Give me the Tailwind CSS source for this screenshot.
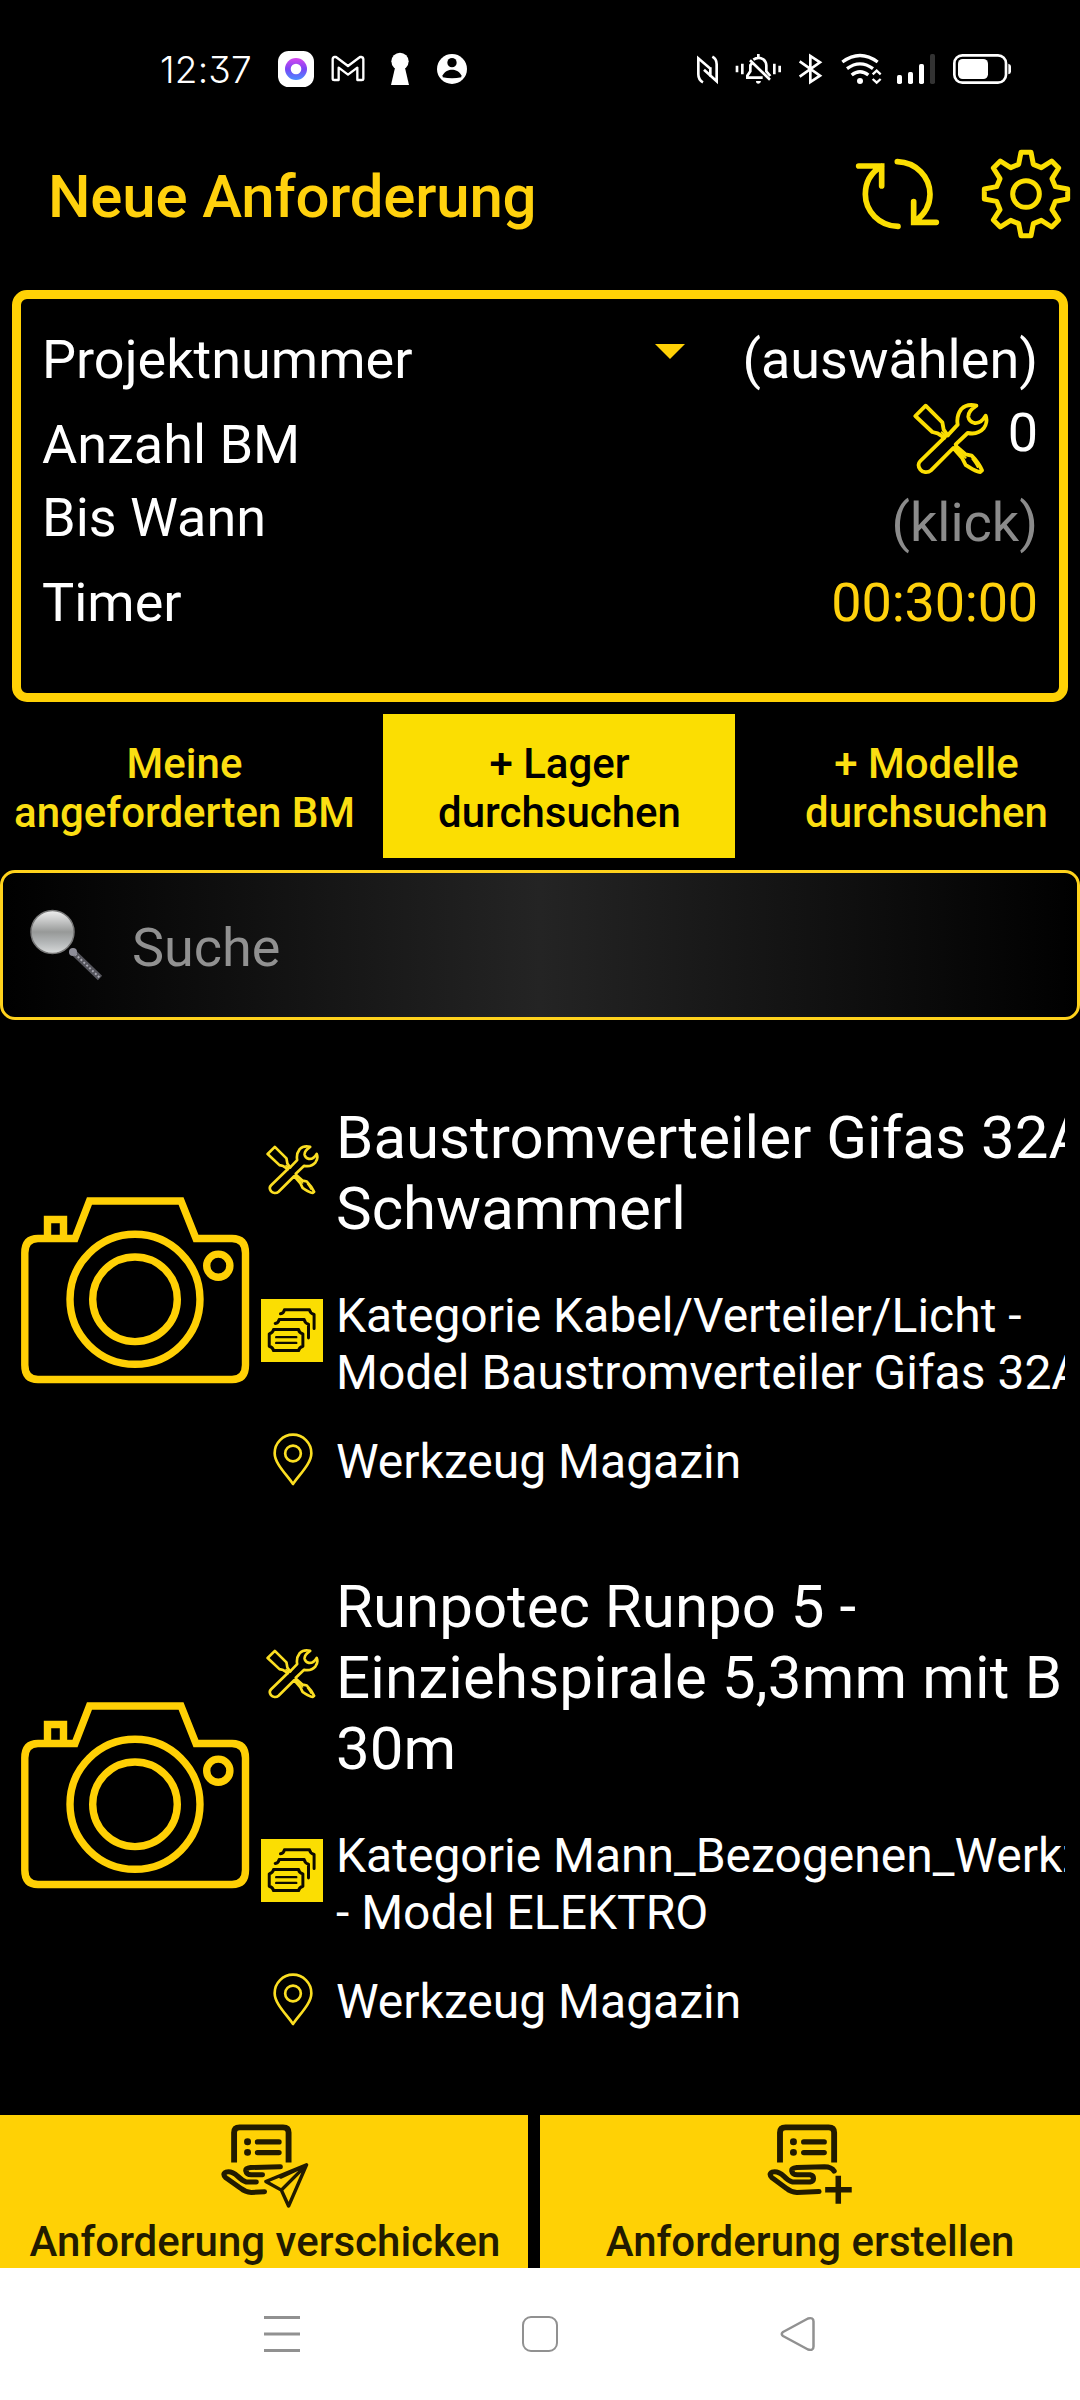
<!DOCTYPE html>
<html lang="de">
<head>
<meta charset="utf-8">
<title>Neue Anforderung</title>
<script src="https://cdn.jsdelivr.net/npm/@tailwindcss/browser@4"></script>
</head>
<body class="bg-black">
<svg class="hidden">
  <defs>
    <symbol id="tools" viewBox="0 0 228 216" preserveAspectRatio="none">
      <g fill="none" stroke="currentColor" stroke-width="11.500" stroke-linejoin="round" stroke-linecap="round">
        <path d="M38 8L7 39L58 87L74 91L94 104M38 8L88 58L92 80L104 97"/>
        <path d="M104 97L134 65C131 48 136 30 145 18C156 7 174 4 190 8C175 18 165 30 166 42C168 53 176 58 184 60C198 62 210 52 218 38C223 50 220 66 212 76C200 90 184 94 164 90L128 124L130 130L158 154L176 158C190 172 200 186 207 202L202 207C186 206 172 194 158 186L148 166L121 135L54 202C44 211 28 208 22 200C14 190 16 180 22 174L94 104"/>
        <path d="M132 140L158 164M178 168C184 176 190 184 194 192" stroke-width="6"/>
        <path d="M86 88L100 101" stroke-width="6"/>
      </g>
    </symbol>
    <symbol id="stack" viewBox="64 567 188 188" preserveAspectRatio="none">
      <rect x="64" y="567" width="188" height="188" fill="#fbde02"/>
      <g fill="none" stroke="#0d0b00" stroke-width="9" stroke-linejoin="round">
        <path d="M102 658H178Q179 668 191 671V708Q180 711 178 721H102Q100 711 89 708V671Q100 668 102 658Z"/>
        <path stroke-linecap="round" stroke-width="7" d="M110 681H171M110 698H171"/>
        <path stroke-linecap="round" d="M107 640Q117 639 119 628H195Q197 639 208 642V683M123 611Q133 610 135 599H211Q213 610 225 613V655"/>
      </g>
    </symbol>
    <symbol id="pin" viewBox="99 969 120 158" preserveAspectRatio="none">
      <g fill="none" stroke="#fbde22" stroke-width="8">
        <path stroke-linejoin="round" d="M159 1121C140 1093 104 1060 104 1029A55 55 0 0 1 214 1029C214 1060 178 1093 159 1121Z"/>
        <circle cx="159" cy="1030" r="23.500"/>
      </g>
    </symbol>
    <symbol id="camera" viewBox="0 0 256 200">
      <g fill="none" stroke="#ffd005" stroke-width="7.4">
        <path d="M75 42.5L89.500 5H181L196 42.500H232Q245.500 42.500 245.500 57V169Q245.500 183.500 232 183.500H38Q24.800 183.500 24.800 169V57Q24.800 42.500 38 42.500H75Z"/>
        <path d="M47.500 42V23.500H63.500V42"/>
        <circle cx="135" cy="103.300" r="65"/>
        <circle cx="135" cy="103.300" r="42.300"/>
        <circle cx="218.300" cy="69.700" r="11.600"/>
      </g>
    </symbol>
  </defs>
</svg>

<div class="flex h-[2400px] w-[1080px] flex-col overflow-hidden bg-black font-['Roboto',sans-serif] text-white">

  <!-- Status bar -->
  <div class="flex h-[110px] shrink-0 items-end">
    <div class="flex h-20 w-[275px] items-center pl-[160px]">
      <span class="pb-0.5 font-['Inter',sans-serif] text-[37px] leading-none font-[350] tracking-[0.2px] [font-feature-settings:'cv09']">12:37</span>
    </div>
    <svg class="h-20 w-[42px]" viewBox="405 0 126 240">
      <defs><linearGradient id="ring" x1="0" y1="0" x2="0" y2="1"><stop offset="0" stop-color="#d846ee"/><stop offset=".5" stop-color="#7a45f5"/><stop offset="1" stop-color="#4a8dff"/></linearGradient></defs>
      <rect x="414" y="63" width="108" height="108" rx="32" fill="#fff"/>
      <circle cx="468" cy="117" r="33" fill="url(#ring)"/><circle cx="468" cy="117" r="16" fill="#fff"/>
    </svg>
    <svg class="ml-[11px] h-20 w-10" viewBox="564 0 120 240" fill="none" stroke="#fff" stroke-width="7" stroke-linejoin="round">
      <path d="M583 81Q578 82 578 88V146Q578 150 583 150H596V113L624 134L652 113V150H665Q670 150 670 146V88Q670 82 664 81H660L624 108L588 81Z"/>
    </svg>
    <svg class="ml-[17px] h-20 w-[30px]" viewBox="735 0 90 240" fill="#fff"><circle cx="780" cy="94" r="26"/><path d="M767 105H793L807 165H753Z"/></svg>
    <svg class="ml-[19px] h-20 w-9" viewBox="882 0 108 240"><circle cx="936" cy="117" r="45" fill="#fff"/><circle cx="936" cy="98" r="14" fill="#000"/><path d="M908 142V136C914 124 926 119 936 119S958 124 964 136V142Q950 145 936 145T908 142Z" fill="#000"/></svg>

    <svg class="ml-[224px] h-20 w-[27px]" viewBox="42 0 81 240" fill="none" stroke="#fff" stroke-width="8"><path d="M69 157Q55 150 55 133V85L93 118M97 80Q110 87 110 103V154L72 119M91 112V140"/></svg>
    <svg class="ml-[13px] h-20 w-[49px]" viewBox="162 0 147 240" fill="none" stroke="#fff" stroke-width="8"><path d="M171 107V127M187 101V133M283 101V133M299 107V127"/><path d="M210 91L270 149M215 101L211 106V124L202 137V143H248M220 89Q235 79 250 88Q258 94 259 106V124L271 138M235 72V82"/><path d="M228 153H243Q242 161 235 161T228 153Z" fill="#fff" stroke="none"/></svg>
    <svg class="ml-[14px] h-20 w-[27px]" viewBox="351 0 81 240" fill="none" stroke="#fff" stroke-width="8"><path d="M359 94L420 137L391 156V78L420 97L359 140"/></svg>
    <svg class="ml-[16px] h-20 w-[43px]" viewBox="480 0 129 240" fill="none" stroke="#fff" stroke-width="10"><path d="M487 96Q540 57 593 96M501 116Q540 87 579 116M515 135Q540 115 565 135"/><circle cx="540" cy="153" r="9" fill="#fff" stroke="none"/><path stroke-width="7" d="M578 133L590 122L602 133M578 147L590 158L602 147"/></svg>
    <svg class="ml-[12px] h-20 w-[42px]" viewBox="645 0 126 240" fill="#fff"><rect x="651" y="135" width="15" height="27" rx="5"/><rect x="684" y="126" width="15" height="36" rx="5"/><rect x="717" y="102" width="15" height="60" rx="5"/><rect x="750" y="72" width="15" height="90" rx="5" fill="#333"/></svg>
    <svg class="ml-[14px] h-20 w-[62px]" viewBox="813 0 186 240"><rect x="823" y="76" width="155" height="82" rx="24" fill="none" stroke="#fff" stroke-width="8"/><rect x="834" y="87" width="90" height="60" rx="14" fill="#fff"/><path d="M985 101Q993 103 993 109V125Q993 131 985 133Z" fill="#fff"/></svg>
  </div>

  <!-- Title bar -->
  <div class="flex h-[180px] shrink-0 items-start">
    <h1 class="mt-[52px] ml-12 w-[805px] text-[60px] leading-[70px] font-medium tracking-[-0.2px] text-[#ffd10d]">Neue Anforderung</h1>
    <svg class="mt-10 size-[90px]" viewBox="100 60 270 270" fill="none" stroke="#fbde02" stroke-width="17" stroke-linecap="round">
      <path d="M117 108H186V168M186 108C150 130 137 160 137 193C137 243 178 288 235 289M350 277H282V215M288 273C316 252 331 226 331 193C331 141 290 97 233 95"/>
    </svg>
    <svg class="mt-[38px] ml-[37px] size-[92px]" viewBox="480 54 276 276" fill="none" stroke="#fbde02" stroke-width="15" stroke-linejoin="round">
      <path d="M603 67H633L640 103L664 113L695 93L716 114L696 146L706 170L743 177V207L706 214L696 239L716 270L695 291L664 271L640 281L633 317H603L596 281L572 271L541 291L520 270L540 239L530 214L493 207V177L530 170L540 146L520 114L541 93L572 113L596 103Z"/>
      <circle cx="618" cy="192" r="40"/>
    </svg>
  </div>

  <!-- Request details -->
  <div class="mx-3 flex h-[412px] shrink-0 justify-between rounded-[15px] border-[9px] border-[#ffd105] pr-[21px] pl-[21px] text-[54px] leading-[63px]">
    <div class="flex flex-col">
      <span class="mt-[29px]">Projektnummer</span>
      <span class="mt-[22px]">Anzahl BM</span>
      <span class="mt-[10px]">Bis Wann</span>
      <span class="mt-[22px]">Timer</span>
    </div>
    <div class="flex flex-col items-end">
      <div class="mt-[29px] flex items-start">
        <svg class="mt-4 mr-[57px] h-[15px] w-[30px]" viewBox="0 0 30 15"><path d="M0 0H30L15 15Z" fill="#ffd105"/></svg>
        <span>(auswählen)</span>
      </div>
      <div class="mt-[10px] flex items-start">
        <svg class="mt-0.5 mr-[19px] h-[72px] w-[76px] text-[#fbde02]"><use href="#tools"/></svg>
        <span>0</span>
      </div>
      <span class="mt-4 text-[#8b8b8b]">(klick)</span>
      <span class="mt-[17px] tracking-[-0.2px] text-[#ffd10d]">00:30:00</span>
    </div>
  </div>

  <!-- Tabs -->
  <div class="mt-3 flex h-36 shrink-0 gap-[15px] text-center text-[42px] leading-[49px] font-medium text-[#fbde12]">
    <div class="w-[368px] pt-[25px] pl-px">Meine<br>angeforderten BM</div>
    <div class="w-[352px] bg-[#fbde02] pt-[25px] pl-px text-black">+ Lager<br>durchsuchen</div>
    <div class="flex-1 pt-[25px] pl-[23px]">+ Modelle<br>durchsuchen</div>
  </div>

  <!-- Search -->
  <div class="mt-3 flex h-[150px] shrink-0 items-center rounded-[15px] border-[3px] border-[#ffd21c] bg-linear-to-r/srgb from-black via-[#242424] to-black pl-[25px]">
    <svg class="size-[76px]" viewBox="0 0 76 76">
      <defs><linearGradient id="lens" x1="0" y1="0" x2="0" y2="1"><stop offset="0" stop-color="#efefef"/><stop offset=".25" stop-color="#c4c5c5"/><stop offset=".5" stop-color="#979998"/><stop offset=".75" stop-color="#b4b7b8"/><stop offset="1" stop-color="#d8dada"/></linearGradient></defs>
      <circle cx="24.500" cy="25" r="21.500" fill="url(#lens)" stroke="#777" stroke-width="1.500"/>
      <path d="M43 43L72 71" stroke="#55555c" stroke-width="6"/><path d="M44 44L72 71" stroke="#a9a9b2" stroke-width="2" stroke-dasharray="2 2"/>
      <circle cx="45" cy="45" r="4" fill="#8d8d98"/>
    </svg>
    <span class="ml-7 pt-1 text-[54px] leading-[63px] text-[#919191]">Suche</span>
  </div>

  <!-- Results -->
  <div class="flex h-[1095px] w-[1065px] shrink-0 flex-col gap-[81px] overflow-hidden pt-[82px]">
    <div class="flex items-center">
      <svg class="h-[200px] w-64 shrink-0"><use href="#camera"/></svg>
      <div class="flex w-[809px] flex-col pl-[5px] whitespace-nowrap">
        <div class="flex items-center">
          <svg class="mr-[17px] mb-[7px] ml-[5px] h-[50px] w-[53px] shrink-0 text-[#fbde22]"><use href="#tools"/></svg>
          <h2 class="text-[60px] leading-[71px]">Baustromverteiler Gifas 32A<br>Schwammerl</h2>
        </div>
        <div class="mt-[43px] flex items-start">
          <svg class="mt-3 mr-[13px] h-[63px] w-[62px] shrink-0"><use href="#stack"/></svg>
          <p class="text-[48px] leading-[57px]">Kategorie Kabel/Verteiler/Licht -<br>Model Baustromverteiler Gifas 32A</p>
        </div>
        <div class="mt-8 flex items-start">
          <svg class="mr-[23px] ml-3 h-[53px] w-10 shrink-0"><use href="#pin"/></svg>
          <p class="text-[48px] leading-[57px]">Werkzeug Magazin</p>
        </div>
      </div>
    </div>
    <div class="flex items-center">
      <svg class="h-[200px] w-64 shrink-0"><use href="#camera"/></svg>
      <div class="flex w-[809px] flex-col pl-[5px] whitespace-nowrap">
        <div class="flex items-center">
          <svg class="mr-[17px] mb-[7px] ml-[5px] h-[50px] w-[53px] shrink-0 text-[#fbde22]"><use href="#tools"/></svg>
          <h2 class="text-[60px] leading-[71px]">Runpotec Runpo 5 -<br><span class="tracking-[0.17px]">Einziehspirale 5,3mm mit B</span><br>30m</h2>
        </div>
        <div class="mt-[43px] flex items-start">
          <svg class="mt-3 mr-[13px] h-[63px] w-[62px] shrink-0"><use href="#stack"/></svg>
          <p class="text-[48px] leading-[57px]">Kategorie Mann_Bezogenen_Werkz<br>- Model ELEKTRO</p>
        </div>
        <div class="mt-8 flex items-start">
          <svg class="mr-[23px] ml-3 h-[53px] w-10 shrink-0"><use href="#pin"/></svg>
          <p class="text-[48px] leading-[57px]">Werkzeug Magazin</p>
        </div>
      </div>
    </div>
  </div>

  <!-- Actions -->
  <div class="flex h-[153px] shrink-0 gap-3 text-[42px] leading-[49px] font-medium text-[#221b00]">
    <div class="flex w-[528px] flex-col items-center bg-[#ffd105] pt-[5px]">
      <svg class="h-[93px] w-[100px]" viewBox="621.700 60 290 280" preserveAspectRatio="none" fill="none" stroke="#221b00" stroke-width="17" stroke-linecap="round" stroke-linejoin="round">
        <path stroke-linecap="butt" d="M680 188V98Q680 82 696 82H822Q838 82 838 98V188"/>
        <path stroke-width="16" d="M748 126H810M748 158H810"/><path stroke-width="20" d="M719 125V126M719 157V158"/>
        <path stroke-width="15" d="M814 201L728 203Q713 205 714 213Q716 225 730 225H762M744 247H716Q704 243 690 229Q672 212 656 217Q645 222 656 234L700 266Q712 277 730 278L768 276"/>
        <path stroke-width="10" d="M890 195L772 245L817 271L838 319ZM890 195L817 271M815 232L886 198"/>
      </svg>
      <span class="mt-1 ml-0.5">Anforderung verschicken</span>
    </div>
    <div class="flex w-[540px] flex-col items-center bg-[#ffd105] pt-[5px]">
      <svg class="h-[93px] w-[100px]" viewBox="639 60 290 280" preserveAspectRatio="none" fill="none" stroke="#221b00" stroke-width="17" stroke-linecap="round" stroke-linejoin="round">
        <path stroke-linecap="butt" d="M697 188V98Q697 82 713 82H838Q854 82 854 98V188"/>
        <path stroke-width="16" d="M766 126H825M766 158H825"/><path stroke-width="20" d="M736 125V126M736 157V158"/>
        <path stroke-width="15" d="M854 214Q846 201 826 201L746 203Q730 205 731 213Q733 225 747 225H784Q794 227 794 236T784 247H734Q720 243 708 229Q690 212 674 217Q663 222 674 234L716 266Q728 277 746 278L810 275"/>
        <path stroke-linecap="butt" stroke-width="16" d="M828 270H905M866 228V312"/>
      </svg>
      <span class="mt-1">Anforderung erstellen</span>
    </div>
  </div>

  <!-- System navigation -->
  <div class="flex h-[132px] shrink-0 items-center justify-between bg-white px-[264px]">
    <svg class="size-9" viewBox="0 0 36 36" fill="#919191"><path d="M0 0H36V3H0ZM0 16.500H36V19.500H0ZM0 33H36V36H0Z"/></svg>
    <div class="size-9 rounded-[9px] border-[2.5px] border-[#919191]"></div>
    <svg class="size-9" viewBox="0 0 36 36" fill="none" stroke="#919191" stroke-width="2.500" stroke-linejoin="round"><path d="M3 16L28 2.500Q33.500 1 33.500 5.500V30.500Q33.500 35 28 33.500L3 20Q.5 18 3 16Z"/></svg>
  </div>
</div>
</body>
</html>
